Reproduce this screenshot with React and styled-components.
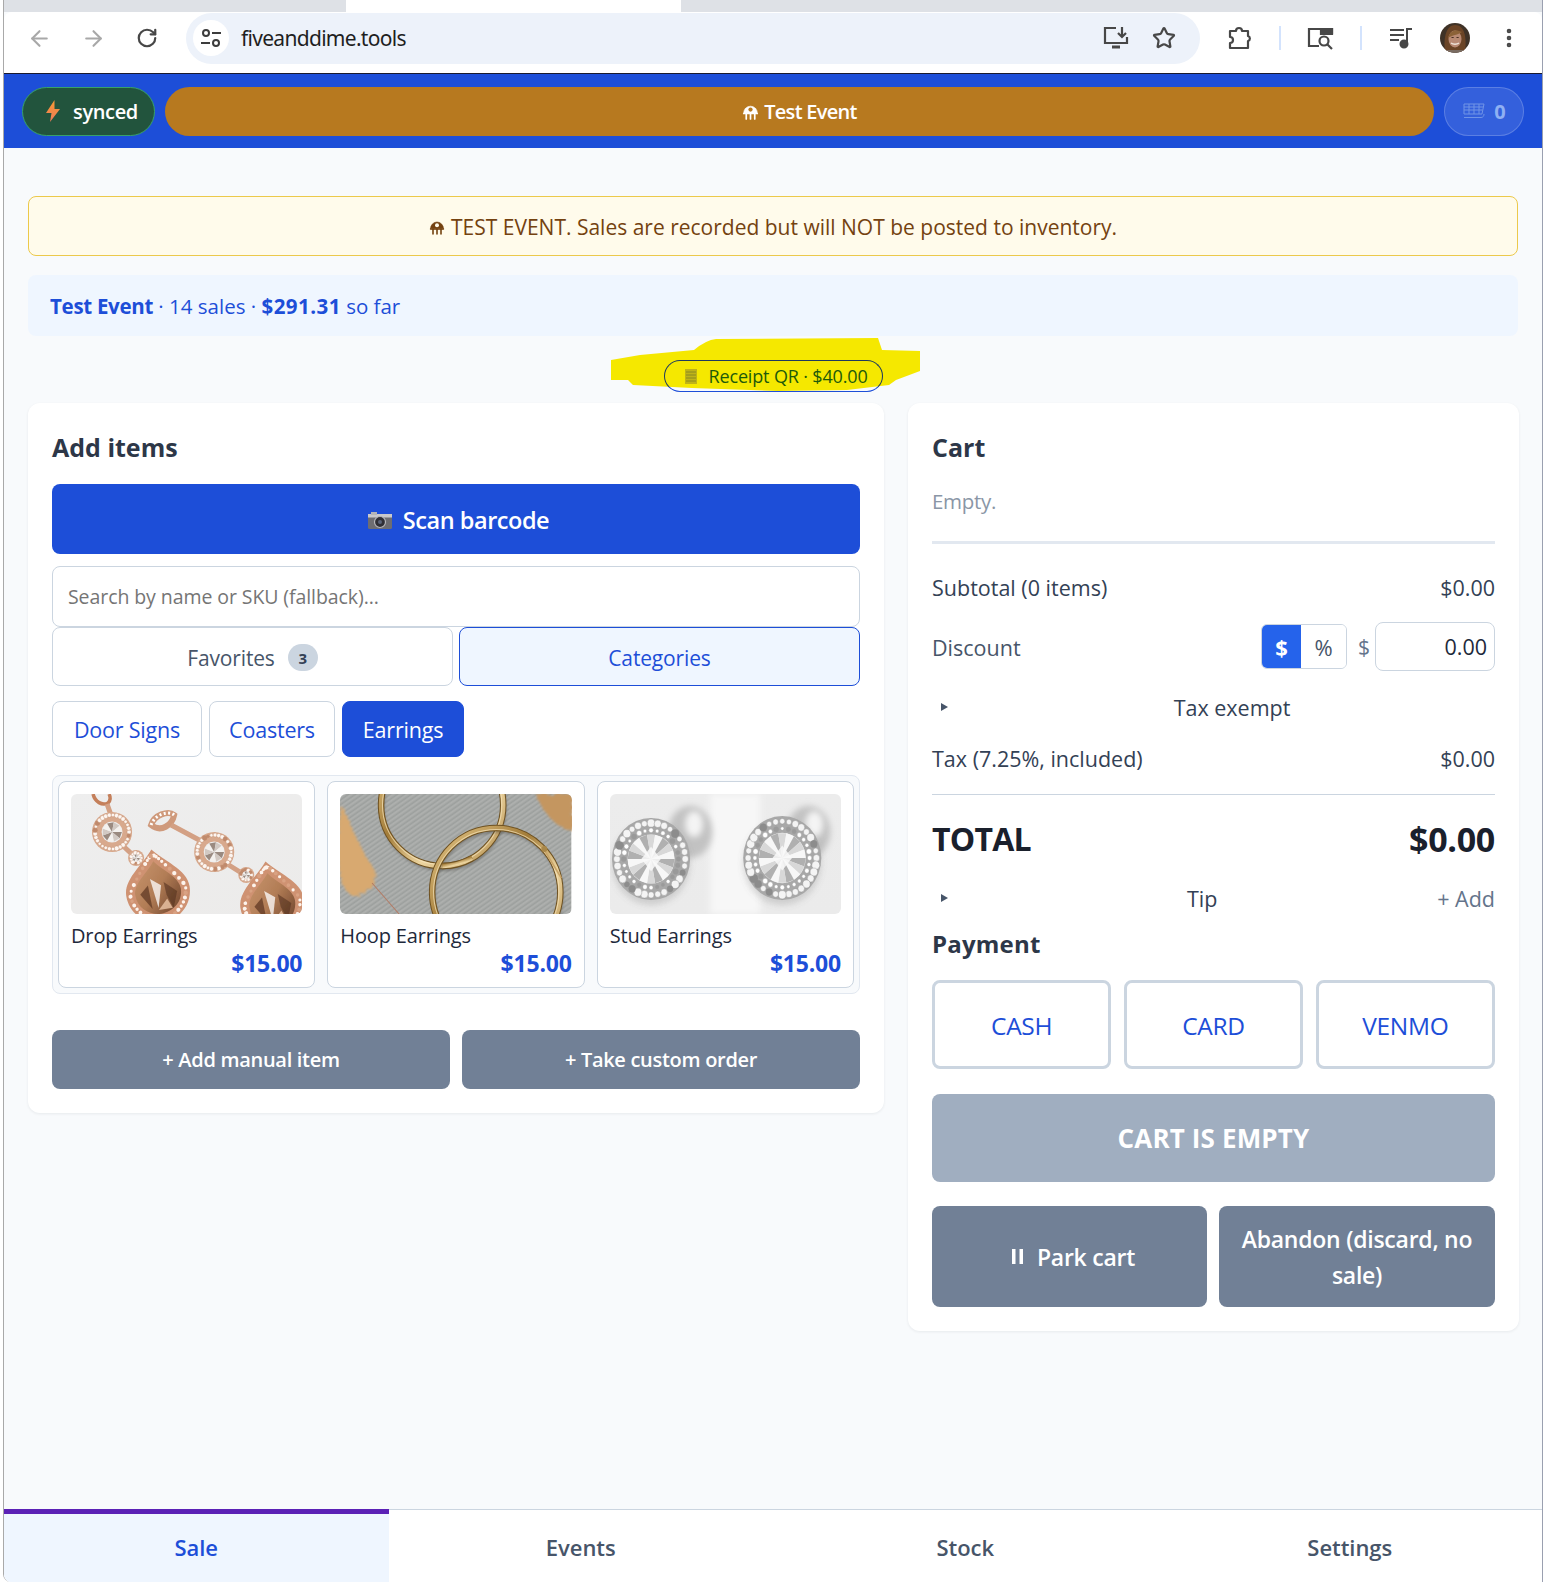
import React from "react";
import styled, { createGlobalStyle } from "styled-components";
import { ArrowLeft, ArrowRight, RotateCw, Star, MoreVertical } from "lucide-react";

const Global = createGlobalStyle`
  html, body { margin: 0; padding: 0; background: #fff; }
  * { box-sizing: border-box; }
  body { font-family: "Open Sans", "Noto Sans", "Liberation Sans", sans-serif; color: #1e293b; }
`;

const Frame = styled.div`
  margin-left: 3px; border-left: 1px solid #a9a9a9; border-right: 1px solid #9aa0b0; border-radius: 0 0 0 8px;
  height: 1582px; display: flex; flex-direction: column; background: #f8fafc; overflow: hidden;
`;
const TabStrip = styled.div`display: flex; height: 12px; background: #dee1e6; flex: none;`;
const ActiveTab = styled.div`width: 335px; margin-left: 342px; background: #fff;`;
const Toolbar = styled.div`
  height: 62px; flex: none; background: #fff; display: flex; align-items: center;
  padding: 0 0 9px 8px; border-bottom: 1px solid #1a1a2e; border-radius: 8px 8px 0 0;
  color: #474747;
`;
const NavSlot = styled.div`
  width: 54px; height: 40px; flex: none; display: flex; align-items: center; justify-content: center;
  color: ${p => p.$dim ? "#a8a8a8" : "#474747"};
`;
const Omnibox = styled.div`
  width: 1014px; height: 51px; margin-left: 12px; flex: none; border-radius: 26px; background: #edf2fa;
  display: flex; align-items: center; padding-left: 7px;
`;
const TuneBadge = styled.div`
  width: 36px; height: 36px; border-radius: 50%; background: #fff; flex: none;
  display: flex; align-items: center; justify-content: center;
`;
const Url = styled.span`
  margin-left: 12px; flex: 1; font-size: 21px; color: #1f1f1f; letter-spacing: -.7px;
  font-family: "Noto Sans", "Open Sans", sans-serif;
`;
const OmniIcon = styled.div`width: 48px; display: flex; justify-content: center; flex: none; margin-right: ${p => p.$mr || 0}px;`;
const ToolIcon = styled.div`
  width: ${p => p.$w || 40}px; margin-left: ${p => p.$ml || 0}px; flex: none;
  display: flex; justify-content: center; align-items: center;
`;
const Sep = styled.div`width: 2px; height: 24px; background: #d3e3fd; flex: none; margin-left: ${p => p.$ml || 0}px;`;

const AppBar = styled.header`
  height: 74px; flex: none; background: #1d4ed8; display: flex; align-items: center; gap: 10px;
  padding: 0 18px;
`;
const SyncPill = styled.div`
  width: 133px; height: 49px; border-radius: 25px; background: #22543d; border: 1px solid #38a169;
  color: #fff; font-size: 20px; font-weight: 600; display: flex; align-items: center; gap: 13px;
  padding-left: 23px; flex: none; letter-spacing: -.35px;
`;
const EventPill = styled.div`
  flex: 1; height: 49px; border-radius: 25px; background: #b7791f; color: #fff; font-size: 20px; font-weight: 600;
  display: flex; align-items: center; justify-content: center; gap: 5px; letter-spacing: -.7px;
`;
const QueuePill = styled.div`
  width: 80px; height: 49px; border-radius: 25px; background: rgba(255,255,255,.1); border: 1px solid rgba(255,255,255,.2);
  color: #8fb0f3; font-size: 20px; font-weight: 700; display: flex; align-items: center; justify-content: center; gap: 8px; flex: none;
`;

const Main = styled.main`flex: 1; padding: 48px 24px 0; display: flex; flex-direction: column;`;
const Banner = styled.div`
  height: 60px; flex: none; padding-top: 1px; background: #fffbeb; border: 1px solid #ecc94b; border-radius: 8px; color: #744210;
  font-size: 21px; font-weight: 500; display: flex; align-items: center; justify-content: center; gap: 6px;
`;
const Summary = styled.div`
  height: 61px; flex: none; margin-top: 19px; padding: 1px 0 0 22px; background: #eff6ff; border-radius: 8px;
  color: #1d4ed8; font-size: 20.5px; display: flex; align-items: center; white-space: pre;
`;
const SummaryName = styled.strong`font-weight: 700; letter-spacing: -.3px;`;
const SummaryAmount = styled.strong`font-weight: 700; letter-spacing: .45px;`;
const ReceiptRow = styled.div`height: 32px; flex: none; margin-top: 24px; display: flex; justify-content: center;`;
const ReceiptPill = styled.div`
  position: relative; width: 219px; height: 32px; border-radius: 16px;
  display: flex; align-items: center; gap: 11px; padding-left: 20px; color: #1e5a0a; font-size: 18px; font-weight: 500;
  letter-spacing: -.15px; white-space: nowrap;
`;
const Highlight = styled.svg`position: absolute; left: -53px; top: -22px; width: 309px; height: 54px; overflow: visible;`;
const ReceiptOutline = styled.div`
  position: absolute; inset: 0; border-radius: 16px; border: 1px solid #1e3a5f; border-bottom-color: #1d4ed8;
`;
const ReceiptIcon = styled.svg`position: relative; flex: none;`;
const ReceiptLabel = styled.span`position: relative;`;
const Columns = styled.div`display: grid; grid-template-columns: 856px 611px; gap: 24px; margin-top: 11px; align-items: start;`;
const Card = styled.section`
  background: #fff; border-radius: 12px; padding: 24px; box-shadow: 0 1px 3px rgba(15,23,42,.07);
`;
const CardTitle = styled.h2`
  margin: 0; height: 41px; line-height: 40px; font-size: 25px; font-weight: 700; color: #2d3748;
`;
const ScanButton = styled.button`
  width: 100%; height: 70px; margin-top: 16px; border: 0; border-radius: 8px; background: #1d4ed8; color: #fff; padding: 2px 0 0 5px;
  font: 600 23.5px "Open Sans", sans-serif; letter-spacing: -.45px; display: flex; align-items: center; justify-content: center; gap: 11px;
`;
const SearchInput = styled.div`
  height: 61px; margin-top: 12px; border: 1px solid #cbd5e0; border-radius: 8px; background: #fff; padding-left: 15px;
  display: flex; align-items: center; font-size: 19.5px; color: #757575; letter-spacing: -.08px;
`;
const ModeTabs = styled.div`display: grid; grid-template-columns: 1fr 1fr; gap: 6px;`;
const ModeTab = styled.div`
  height: 59px; padding-top: 2px; border-radius: 8px; display: flex; align-items: center; justify-content: center; gap: 13px;
  font-size: 21px; font-weight: 500; letter-spacing: -.15px;
  border: 1px solid ${p => p.$active ? "#1d4ed8" : "#cbd5e0"};
  background: ${p => p.$active ? "#eff6ff" : "#fff"};
  color: ${p => p.$active ? "#1d4ed8" : "#475569"};
`;
const Count = styled.span`
  width: 30px; height: 27px; border-radius: 14px; background: #cbd5e0; color: #334155; font-size: 15px; font-weight: 700;
  display: inline-flex; align-items: center; justify-content: center; letter-spacing: 0;
`;
const Chips = styled.div`display: flex; gap: 7px; margin-top: 15px;`;
const Chip = styled.div`
  height: 56px; width: ${p => p.$w}px; padding-top: 1px; border-radius: 8px; display: flex; align-items: center; justify-content: center;
  font-size: 21.5px; font-weight: 500; letter-spacing: -.2px;
  border: 1px solid ${p => p.$active ? "#1d4ed8" : "#cbd5e0"};
  background: ${p => p.$active ? "#1d4ed8" : "#fff"};
  color: ${p => p.$active ? "#fff" : "#1d4ed8"};
`;
const Products = styled.div`
  height: 219px; margin-top: 18px; padding: 5px; border: 1px solid #e2e8f0; border-radius: 8px; background: #f8fafc;
  display: grid; grid-template-columns: repeat(3, 1fr); gap: 12px;
`;
const Product = styled.div`
  background: #fff; border: 1px solid #cbd5e0; border-radius: 8px; padding: 12px 12px 0;
  display: flex; flex-direction: column;
`;
const Photo = styled.svg`display: block; width: 100%; height: 120px; border-radius: 6px; flex: none;`;
const ProductName = styled.div`margin-top: 8px; font-size: 20px; font-weight: 500; color: #1e293b; line-height: 28px; letter-spacing: -.15px;`;
const Price = styled.div`text-align: right; font-size: 23px; font-weight: 700; color: #1d4ed8; line-height: 26px; letter-spacing: -.2px;`;
const ManualRow = styled.div`display: grid; grid-template-columns: 1fr 1fr; gap: 12px; margin-top: 36px;`;
const GreyButton = styled.div`
  height: 59px; border-radius: 8px; background: #718096; color: #fff; font-weight: 600;
  font-size: 20px; letter-spacing: -.3px; display: flex; align-items: center; justify-content: center;
`;
const ActionButton = styled.div`
  height: 101px; border-radius: 8px; background: #718096; color: #fff; font-weight: 600; font-size: 23px; letter-spacing: -.25px;
  line-height: 36px; text-align: center; padding: 0 16px 0 ${p => p.$pl || 16}px;
  display: flex; align-items: center; justify-content: center; gap: 14px;
`;

const Empty = styled.div`margin-top: 18px; height: 30px; line-height: 30px; font-size: 20.5px; color: #8a96a6; letter-spacing: -.3px;`;
const ThickRule = styled.div`height: 3px; margin-top: 25px; background: #e2e8f0;`;
const Row = styled.div`
  display: flex; align-items: center; justify-content: space-between; height: ${p => p.$h || 30}px; margin-top: ${p => p.$mt}px;
  font-size: 21.5px; color: ${p => p.$c || "#334155"};
`;
const Disclosure = styled.div`
  display: flex; align-items: center; height: 30px; margin-top: ${p => p.$mt}px; font-size: 21.5px; color: #334155;
`;
const Caret = styled.svg`margin-left: 8px; width: 9px; height: 10px; flex: none;`;
const DisclosureLabel = styled.span`flex: 1; text-align: center; padding-left: ${p => p.$pl}px;`;
const AddLink = styled.span`color: #64748b;`;
const DiscountLabel = styled.span`padding-top: 2px;`;
const DiscountControls = styled.div`display: flex; align-items: center;`;
const Segments = styled.div`display: flex; height: 45px; width: 86px; border: 1px solid #cbd5e0; border-radius: 6px; overflow: hidden;`;
const Segment = styled.div`
  flex: ${p => p.$active ? "0 0 39px" : 1}; display: flex; align-items: center; justify-content: center; font-size: 22px;
  font-weight: ${p => p.$active ? 700 : 400};
  background: ${p => p.$active ? "#2563eb" : "#fff"}; color: ${p => p.$active ? "#fff" : "#475569"};
`;
const DollarSign = styled.span`width: 28px; padding-left: 11px; color: #64748b; font-size: 21px;`;
const AmountInput = styled.div`
  width: 120px; height: 49px; border: 1px solid #cbd5e0; border-radius: 8px; background: #fff; color: #1e293b;
  display: flex; align-items: center; justify-content: flex-end; padding-right: 7px; font-size: 21.5px;
`;
const ThinRule = styled.div`height: 1px; margin-top: 21px; background: #cbd5e0;`;
const TotalRow = styled(Row)`font-size: 32px; font-weight: 700; color: #1a202c; letter-spacing: -.8px; line-height: 44px; padding-bottom: 2px;`;
const TotalValue = styled.span`font-size: 34px; letter-spacing: -.3px;`;
const PaymentTitle = styled.h3`margin: 15px 0 0; height: 32px; line-height: 32px; font-size: 24px; font-weight: 700; color: #2d3748; letter-spacing: .2px;`;
const PayGrid = styled.div`display: grid; grid-template-columns: repeat(3, 1fr); gap: 12.5px; margin-top: 20px;`;
const PayButton = styled.div`
  height: 89px; padding-top: 2px; border: 3px solid #cbd5e0; border-radius: 8px; background: #fff; color: #1d4ed8; font-size: 24.5px; font-weight: 500;
  display: flex; align-items: center; justify-content: center; letter-spacing: -.3px;
`;
const EmptyButton = styled.div`
  height: 88px; margin-top: 25px; border-radius: 8px; background: #a0aec0; color: #fff; font-size: 26px; font-weight: 700;
  display: flex; align-items: center; justify-content: center; letter-spacing: .15px;
`;
const ActionGrid = styled.div`display: grid; grid-template-columns: 275px 1fr; gap: 12px; margin-top: 24px;`;

const BottomNav = styled.nav`height: 73px; flex: none; display: grid; grid-template-columns: repeat(4, 1fr); background: #fff; border-top: 1px solid #cbd5e0;`;
const NavTab = styled.div`
  display: flex; align-items: center; justify-content: center; font-size: 22px; font-weight: 600; letter-spacing: -.05px;
  padding: ${p => p.$active ? "0 0 3px" : "2px 0 0"}; margin-top: ${p => p.$active ? "-1px" : 0};
  border-top: ${p => p.$active ? "5px solid #5b21b6" : "0"};
  background: ${p => p.$active ? "#eff6ff" : "#fff"};
  color: ${p => p.$active ? "#1d4ed8" : "#475569"};
`;

const TentIcon = ({ c, bg, s = 16 }) => (
  <svg width={s} height={s} viewBox="0 0 16 16" fill="none" stroke={c} strokeLinecap="round">
    <path d="M1.5 9.5A6.5 6.5 0 0 1 14.5 9.5Z" fill={c} strokeWidth=".6" />
    <circle cx="8" cy="6.2" r="2" fill={bg} stroke="none" />
    <path d="M1.5 10h13" strokeWidth="1.4" />
    <path d="M4 10v5M8 10v5M12 10v5" strokeWidth="1.6" />
  </svg>
);

const rng = (seed) => { let s = seed; return () => (s = (s * 9301 + 49297) % 233280) / 233280; };

const GemRing = ({ r, n, size, fill, stroke, seed = 3 }) => {
  const rand = rng(seed);
  return Array.from({ length: n }, (_, i) => {
    const a = (i / n) * Math.PI * 2;
    return (
      <circle key={i} cx={Math.cos(a) * r} cy={Math.sin(a) * r} r={size * (.75 + rand() * .5)}
        fill={rand() > .25 ? fill : stroke} stroke={stroke} strokeWidth=".4" />
    );
  });
};

const Facets = ({ r, n, a, b, c }) => (
  Array.from({ length: n }, (_, i) => {
    const t1 = (i / n) * Math.PI * 2;
    const t2 = ((i + 1) / n) * Math.PI * 2;
    return (
      <path key={i} d={`M0 0L${Math.cos(t1) * r} ${Math.sin(t1) * r}L${Math.cos(t2) * r} ${Math.sin(t2) * r}Z`}
        fill={i % 3 === 0 ? b : i % 3 === 1 ? a : c} />
    );
  })
);

const DropPhoto = () => {
  const Halo = ({ x, y, r, seed }) => (
    <g transform={`translate(${x} ${y})`}>
      <circle r={r + 1} fill="#d8a98d" />
      <GemRing r={r - 2} n={Math.round(r * 1.5)} size={2} fill="#fdf6f1" stroke="#c08a6c" seed={seed} />
      <circle r={r * .55} fill="#eee" />
      <Facets r={r * .52} n={9} a="#d2c9c3" b="#9a8a80" c="#f4f1ee" />
    </g>
  );
  const Pear = ({ x, y, seed }) => {
    const rand = rng(seed);
    const dots = Array.from({ length: 38 }, (_, i) => {
      const t = (i / 38) * Math.PI * 2;
      const px = Math.sin(t) * 28 * (Math.cos(t) > 0 ? (.35 + .65 * (1 - Math.cos(t))) : 1);
      const py = Math.cos(t) > 0 ? -Math.cos(t) * 35 + 4 : -Math.cos(t) * 29 + 4;
      return <circle key={i} cx={px} cy={py} r={1.5 + rand() * .7} fill={rand() > .35 ? "#fdf3ec" : "#d9a283"} />;
    });
    return (
      <g transform={`translate(${x} ${y}) rotate(-9)`}>
        <path d="M0 -37C10 -24 32 -12 32 5C32 24 16 37 0 37C-16 37 -32 24 -32 5C-32 -12 -10 -24 0 -37Z" fill="#cf9272" />
        {dots}
        <path d="M0 -25C7 -15 23 -6 23 6C23 20 11 28 0 28C-11 28 -23 20 -23 6C-23 -6 -7 -15 0 -25Z" fill="url(#pear)" />
        <path d="M-6 -8L-2 22L4 0Z" fill="#fff" opacity=".75" />
        <path d="M-18 6L-9 -2L-8 22Z" fill="#5a3420" opacity=".7" />
        <path d="M7 -3L19 8L13 24L8 10Z" fill="#4f2e1c" opacity=".55" />
        <path d="M-2 24L8 14L12 24Z" fill="#ecc6a6" opacity=".8" />
      </g>
    );
  };
  return (
    <Photo viewBox="0 0 231 120" preserveAspectRatio="none">
      <defs>
        <linearGradient id="pear" x1="0" y1="0" x2="1" y2="1"><stop offset="0" stopColor="#c9966f" /><stop offset=".5" stopColor="#b27d56" /><stop offset="1" stopColor="#6a4029" /></linearGradient>
        <linearGradient id="dropbg" x1="0" y1="0" x2="1" y2="1"><stop offset="0" stopColor="#eeeeee" /><stop offset="1" stopColor="#ecebea" /></linearGradient>
        <filter id="dropsoft"><feGaussianBlur stdDeviation=".4" /></filter>
      </defs>
      <rect width="231" height="120" fill="url(#dropbg)" />
      <g filter="url(#dropsoft)">
        <path d="M22 0C24 8 31 12 37 9C40 6 39 2 38 0" fill="none" stroke="#c47f5a" strokeWidth="3.5" />
        <path d="M36 10L41 24M50 50L65 64L80 76" stroke="#d3a084" strokeWidth="5" fill="none" />
        <path d="M80 31C83 21 97 16 103 21C101 31 90 39 80 31Z" fill="none" stroke="#cf9a7c" strokeWidth="6" />
        <path d="M80 31C83 21 97 16 103 21" fill="none" stroke="#fff" strokeWidth="3" strokeDasharray="2 2.4" />
        <path d="M100 31L128 46M156 70L175 82L190 94" stroke="#d3a084" strokeWidth="5" fill="none" />
        <Halo x={41} y={38} r={19} seed={11} />
        <Halo x={143} y={58} r={19} seed={23} />
        <Halo x={65} y={64} r={7} seed={5} />
        <Halo x={175} y={81} r={7} seed={7} />
        <Pear x={86} y={92} seed={9} />
        <Pear x={200} y={104} seed={17} />
      </g>
    </Photo>
  );
};

const HoopPhoto = () => {
  const Ring = ({ cx, cy, r }) => (
    <g fill="none">
      <circle cx={cx + 1} cy={cy + 3} r={r} stroke="#3d3a35" strokeWidth="4" opacity=".4" filter="url(#shadow)" />
      <circle cx={cx} cy={cy} r={r} stroke="#6f5222" strokeWidth="6.5" />
      <circle cx={cx} cy={cy} r={r} stroke="url(#gold)" strokeWidth="4.5" />
      <circle cx={cx} cy={cy} r={r - 1.4} stroke="#f7e6bd" strokeWidth="1" opacity=".7" />
    </g>
  );
  return (
    <Photo viewBox="0 0 231 120" preserveAspectRatio="none">
      <defs>
        <pattern id="twill" width="4" height="4" patternUnits="userSpaceOnUse" patternTransform="rotate(-35)">
          <rect width="4" height="4" fill="#a7aaa8" /><path d="M0 1h4" stroke="#9a9d9b" strokeWidth="1" /><path d="M0 3h4" stroke="#b2b4b2" strokeWidth=".8" />
        </pattern>
        <filter id="soft" x="-30%" y="-30%" width="160%" height="160%"><feTurbulence type="fractalNoise" baseFrequency=".12 .5" numOctaves="2" seed="3" /><feDisplacementMap in="SourceGraphic" scale="9" /><feGaussianBlur stdDeviation="1.1" /></filter>
        <filter id="shadow" x="-20%" y="-20%" width="140%" height="140%"><feGaussianBlur stdDeviation="1.5" /></filter>
        <linearGradient id="gold" x1="0" y1="0" x2="1" y2="1"><stop offset="0" stopColor="#e7c98a" /><stop offset=".4" stopColor="#a37c38" /><stop offset=".65" stopColor="#edd5a0" /><stop offset="1" stopColor="#b08a48" /></linearGradient>
      </defs>
      <rect width="231" height="120" fill="url(#twill)" />
      <g filter="url(#soft)">
        <path d="M1 10C10 26 18 54 36 78C36 96 22 106 10 100C0 94 -3 70 -2 40Z" fill="#d8a96f" />
        <path d="M196 0L233 0L233 36C218 36 206 22 198 6Z" fill="#c49660" />
      </g>
      <path d="M32 89L59 120" stroke="#b37a63" strokeWidth="1" fill="none" />
      <Ring cx={102} cy={11} r={61} />
      <Ring cx={156} cy={98} r={64} />
      <path d="M102 72A61 61 0 0 0 132 64" fill="none" stroke="#6f5222" strokeWidth="6.5" />
      <path d="M102 72A61 61 0 0 0 132 64" fill="none" stroke="url(#gold)" strokeWidth="4.5" />
      <path d="M204 56L221 84" stroke="#c9a468" strokeWidth="1.6" fill="none" />
      <circle cx="204" cy="55" r="3" fill="#a98748" />
    </Photo>
  );
};

const StudPhoto = () => {
  const Stud = ({ x, y, rx, ry, seed }) => (
    <g transform={`translate(${x} ${y}) scale(${rx / 40} ${ry / 40})`}>
      <ellipse cy="5" rx="40" ry="40" fill="#777" opacity=".25" filter="url(#studblur)" />
      <circle r="40" fill="#a8a8a8" />
      <GemRing r={35} n={32} size={3.4} fill="#f4f4f4" stroke="#8c8c8c" seed={seed} />
      <GemRing r={28} n={28} size={2.2} fill="#fff" stroke="#9a9a9a" seed={seed + 3} />
      <circle r="24" fill="#f2f2f2" />
      <Facets r={24} n={18} a="#d8d8d8" b="#b0b0b0" c="#f7f7f7" />
      <path d="M-10 0L0 -12L10 0L0 12Z" fill="#f9f9f9" opacity=".85" />
    </g>
  );
  return (
    <Photo viewBox="0 0 231 120" preserveAspectRatio="none">
      <defs>
        <filter id="studblur" x="-40%" y="-40%" width="180%" height="180%"><feGaussianBlur stdDeviation="3" /></filter>
        <filter id="studsoft"><feGaussianBlur stdDeviation=".4" /></filter>
        <linearGradient id="studbg" x1="0" y1="0" x2="0" y2="1"><stop offset="0" stopColor="#ececec" /><stop offset="1" stopColor="#ebebeb" /></linearGradient>
      </defs>
      <rect width="231" height="120" fill="url(#studbg)" />
      <rect x="100" width="50" height="120" fill="#f7f7f7" filter="url(#studblur)" />
      <ellipse cx="80" cy="38" rx="22" ry="26" fill="#c2c2c2" filter="url(#studblur)" />
      <ellipse cx="84" cy="30" rx="9" ry="13" fill="#f4f4f4" filter="url(#studblur)" />
      <ellipse cx="198" cy="38" rx="22" ry="26" fill="#c2c2c2" filter="url(#studblur)" />
      <ellipse cx="204" cy="30" rx="9" ry="13" fill="#f4f4f4" filter="url(#studblur)" />
      <g filter="url(#studsoft)">
        <Stud x={41} y={65} rx={39} ry={41} seed={31} />
        <Stud x={172} y={64} rx={39} ry={42} seed={57} />
      </g>
    </Photo>
  );
};

const products = [
  { name: "Drop Earrings", photo: <DropPhoto /> },
  { name: "Hoop Earrings", photo: <HoopPhoto /> },
  { name: "Stud Earrings", photo: <StudPhoto /> },
];

export default function App() {
  return (
    <>
      <Global />
      <Frame>
        <TabStrip><ActiveTab /></TabStrip>
        <Toolbar>
          <NavSlot $dim><ArrowLeft size={25} strokeWidth={2} /></NavSlot>
          <NavSlot $dim><ArrowRight size={25} strokeWidth={2} /></NavSlot>
          <NavSlot><RotateCw size={22} strokeWidth={2.4} /></NavSlot>
          <Omnibox>
            <TuneBadge>
              <svg width="22" height="22" viewBox="0 0 22 22" fill="none" stroke="#3c3c3c" strokeWidth="2">
                <circle cx="6" cy="6" r="3" /><path d="M12 6h9M1 16h9" /><circle cx="16" cy="16" r="3" />
              </svg>
            </TuneBadge>
            <Url>fiveanddime.tools</Url>
            <OmniIcon>
              <svg width="26" height="24" viewBox="0 0 26 24" fill="none" stroke="#474747" strokeWidth="2.2">
                <path d="M13 2H2v15h22v-6" /><path d="M9 21h8" strokeWidth="3" /><path d="M19 1v9M15 7l4 4 4-4" />
              </svg>
            </OmniIcon>
            <OmniIcon $mr={12}><Star size={24} strokeWidth={2.2} color="#474747" /></OmniIcon>
          </Omnibox>
          <ToolIcon $w={40} $ml={20}>
            <svg width="26" height="26" viewBox="0 0 26 26" fill="none" stroke="#474747" strokeWidth="2.2" strokeLinejoin="round">
              <path d="M3 6h6a3 3 0 0 1 6 0h6v5a2.6 2.6 0 0 1 0 5v7H3v-5a3 3 0 0 0 0-6Z" />
            </svg>
          </ToolIcon>
          <Sep $ml={19} />
          <ToolIcon $w={40} $ml={20}>
            <svg width="28" height="24" viewBox="0 0 28 24" fill="none" stroke="#474747" strokeWidth="2.2">
              <path d="M12 20H2V3h23v5" /><path d="M14 3h11v5H14z" fill="#474747" /><circle cx="17" cy="15" r="4.5" /><path d="M20.5 18.5L25 23" />
            </svg>
          </ToolIcon>
          <Sep $ml={19} />
          <ToolIcon $w={40} $ml={19}>
            <svg width="24" height="22" viewBox="0 0 24 22" fill="none" stroke="#474747" strokeWidth="2">
              <path d="M1 3h14M1 8h14M1 13h9" /><path d="M18 17V2h5" /><circle cx="15" cy="17" r="3.5" fill="#474747" />
            </svg>
          </ToolIcon>
          <ToolIcon $w={30} $ml={19}>
            <svg width="30" height="30" viewBox="0 0 30 30">
              <defs><clipPath id="av"><circle cx="15" cy="15" r="15" /></clipPath></defs>
              <g clipPath="url(#av)">
                <rect width="30" height="30" fill="#3f3227" />
                <path d="M5 29C3 13 7 2 15 2C24 2 27 13 25 29Z" fill="#6b4426" />
                <ellipse cx="15" cy="16" rx="6.5" ry="8.5" fill="#b98a74" />
                <path d="M8 15C10 7 16 6 22 9C18 12 12 12 8 15Z" fill="#8c6238" />
                <path d="M11 20c2 1.6 6 1.6 8 0" stroke="#efe4da" strokeWidth="1.4" fill="none" />
                <path d="M11.5 14.5h2.2M16.5 14.5h2.2" stroke="#4a2f22" strokeWidth="1" />
                <rect y="27" width="30" height="3" fill="#7a6c62" />
              </g>
            </svg>
          </ToolIcon>
          <ToolIcon $w={30} $ml={24}><MoreVertical size={24} strokeWidth={2.6} color="#474747" /></ToolIcon>
        </Toolbar>
        <AppBar>
          <SyncPill>
            <svg width="14" height="24" viewBox="0 0 14 22"><defs><linearGradient id="bolt" x1="0" y1="0" x2="0" y2="1"><stop offset="0" stopColor="#f59a33" /><stop offset="1" stopColor="#ef7a5a" /></linearGradient></defs><path d="M8.5 0L0 13h5.5L4 22l10-13H8.5z" fill="url(#bolt)" /></svg>
            synced
          </SyncPill>
          <EventPill><TentIcon c="#fff" bg="#b7791f" s={17} />Test Event</EventPill>
          <QueuePill>
            <svg width="24" height="18" viewBox="0 0 24 18" fill="none" stroke="#7094e6" strokeWidth="1"><path d="M2 2h20l-2 10H2zM2 5h19M2 8h18.5M7 2v10M12 2v10M17 2v10M2 15.5h17c2 0 3-1.5 3-3.5" /></svg>
            0
          </QueuePill>
        </AppBar>
        <Main>
          <Banner><TentIcon c="#744210" bg="#fffbeb" />TEST EVENT. Sales are recorded but will NOT be posted to inventory.</Banner>
          <Summary><SummaryName>Test Event</SummaryName> · 14 sales · <SummaryAmount>$291.31</SummaryAmount> so far</Summary>
          <ReceiptRow>
            <ReceiptPill>
              <Highlight viewBox="0 0 309 54">
                <path d="M0 22L29 17L83 12Q95 2 105 1L267 0L271 12L309 13L309 33L285 42L278 47L236 52L167 53L81 50L22 47L17 42L0 42Z" fill="#f5e800" />
              </Highlight>
              <ReceiptOutline />
              <ReceiptIcon width="14" height="17" viewBox="0 0 14 17"><rect x="1" y="1" width="12" height="15" fill="#bfb318" /><path d="M2 4h10M2 7h10M2 10h10M2 13h10" stroke="#8a8a20" strokeWidth="1" /></ReceiptIcon>
              <ReceiptLabel>Receipt QR · $40.00</ReceiptLabel>
            </ReceiptPill>
          </ReceiptRow>
          <Columns>
            <Card>
              <CardTitle>Add items</CardTitle>
              <ScanButton>
                <svg width="24" height="20" viewBox="1 0 24 20">
                  <rect x="1" y="4" width="24" height="15" rx="1.5" fill="#6d6d72" />
                  <rect x="1" y="4" width="24" height="3.5" fill="#c9c9cc" />
                  <rect x="4" y="2" width="6" height="3" fill="#b5b5b8" />
                  <circle cx="13" cy="12" r="5.5" fill="#2f2f36" stroke="#b8b8bc" strokeWidth="1.2" />
                  <circle cx="13" cy="12" r="2" fill="#5a6378" />
                </svg>
                Scan barcode
              </ScanButton>
              <SearchInput>Search by name or SKU (fallback)...</SearchInput>
              <ModeTabs>
                <ModeTab>Favorites <Count>3</Count></ModeTab>
                <ModeTab $active>Categories</ModeTab>
              </ModeTabs>
              <Chips>
                <Chip $w={150}>Door Signs</Chip>
                <Chip $w={126}>Coasters</Chip>
                <Chip $w={122} $active>Earrings</Chip>
              </Chips>
              <Products>
                {products.map(p => (
                  <Product key={p.name}>
                    {p.photo}
                    <ProductName>{p.name}</ProductName>
                    <Price>$15.00</Price>
                  </Product>
                ))}
              </Products>
              <ManualRow>
                <GreyButton>+ Add manual item</GreyButton>
                <GreyButton>+ Take custom order</GreyButton>
              </ManualRow>
            </Card>
            <Card>
              <CardTitle>Cart</CardTitle>
              <Empty>Empty.</Empty>
              <ThickRule />
              <Row $mt={28}><span>Subtotal (0 items)</span><span>$0.00</span></Row>
              <Row $mt={20} $h={49} $c="#475569">
                <DiscountLabel>Discount</DiscountLabel>
                <DiscountControls>
                  <Segments><Segment $active>$</Segment><Segment>%</Segment></Segments>
                  <DollarSign>$</DollarSign>
                  <AmountInput>0.00</AmountInput>
                </DiscountControls>
              </Row>
              <Disclosure $mt={21}>
                <Caret viewBox="0 0 9 10"><path d="M1 1l7 4-7 4z" fill="#475569" /></Caret>
                <DisclosureLabel $pl={20}>Tax exempt</DisclosureLabel>
              </Disclosure>
              <Row $mt={21}><span>Tax (7.25%, included)</span><span>$0.00</span></Row>
              <ThinRule />
              <TotalRow $mt={22} $h={46}><span>TOTAL</span><TotalValue>$0.00</TotalValue></TotalRow>
              <Disclosure $mt={20}>
                <Caret viewBox="0 0 9 10"><path d="M1 1l7 4-7 4z" fill="#475569" /></Caret>
                <DisclosureLabel $pl={18}>Tip</DisclosureLabel>
                <AddLink>+ Add</AddLink>
              </Disclosure>
              <PaymentTitle>Payment</PaymentTitle>
              <PayGrid>
                <PayButton>CASH</PayButton>
                <PayButton>CARD</PayButton>
                <PayButton>VENMO</PayButton>
              </PayGrid>
              <EmptyButton>CART IS EMPTY</EmptyButton>
              <ActionGrid>
                <ActionButton $pl={24}>
                  <svg width="11" height="15" viewBox="0 0 11 15"><path d="M0 0h3.5v15H0zM7.5 0H11v15H7.5z" fill="#fff" /></svg>
                  Park cart
                </ActionButton>
                <ActionButton>Abandon (discard, no sale)</ActionButton>
              </ActionGrid>
            </Card>
          </Columns>
        </Main>
        <BottomNav>
          <NavTab $active>Sale</NavTab>
          <NavTab>Events</NavTab>
          <NavTab>Stock</NavTab>
          <NavTab>Settings</NavTab>
        </BottomNav>
      </Frame>
    </>
  );
}
